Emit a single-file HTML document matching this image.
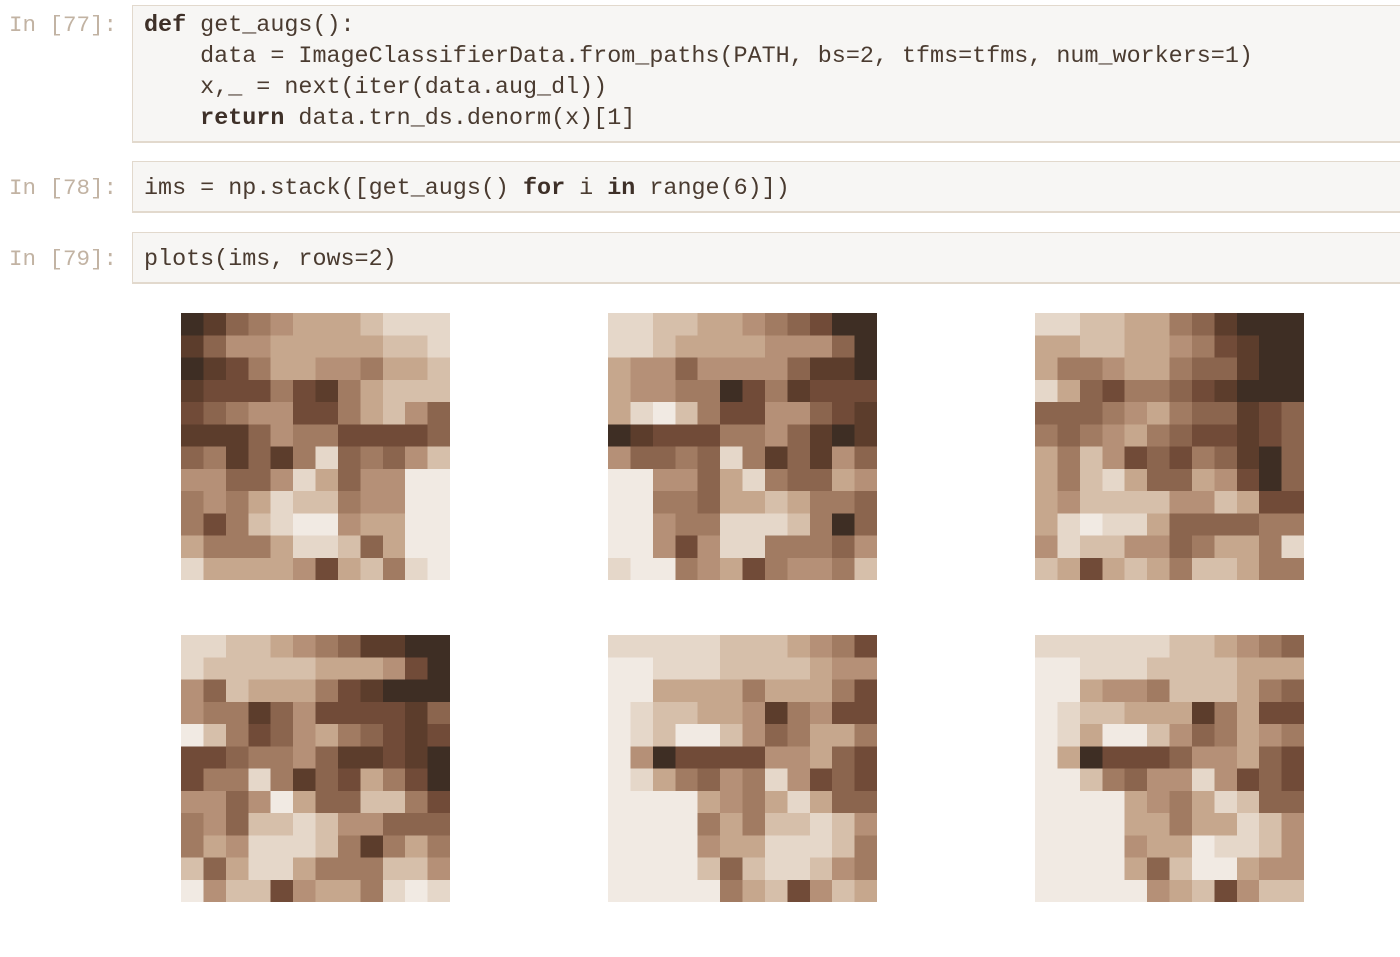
<!DOCTYPE html>
<html><head><meta charset="utf-8"><style>
body{margin:0;width:1400px;height:957px;background:#fff;overflow:hidden;position:relative;font-family:"Liberation Mono",monospace;font-size:23.4px;color:#4a3b30}
.cell{position:absolute;left:132px;width:1280px;background:#f7f6f4;border:1px solid #e2d9cd;border-bottom:2px solid #e2d9cd;box-sizing:border-box}
.p{position:absolute;left:9px;color:#c2b3a3;font-size:22.5px}
.l{position:absolute;left:11px;white-space:pre;line-height:31px}
b{font-weight:bold;color:#3e3028}
svg{position:absolute}
</style></head><body>
<div class="cell" style="top:5px;height:138px"><div class="l" style="top:5px"><b>def</b> get_augs():
    data = ImageClassifierData.from_paths(PATH, bs=2, tfms=tfms, num_workers=1)
    x,_ = next(iter(data.aug_dl))
    <b>return</b> data.trn_ds.denorm(x)[1]</div></div>
<div class="p" style="top:12px">In [77]:</div>
<div class="cell" style="top:161px;height:52px"><div class="l" style="top:12px">ims = np.stack([get_augs() <b>for</b> i <b>in</b> range(6)])</div></div>
<div class="p" style="top:175px">In [78]:</div>
<div class="cell" style="top:232px;height:52px"><div class="l" style="top:12px">plots(ims, rows=2)</div></div>
<div class="p" style="top:246px">In [79]:</div>
<div id="imgs"></div>
<script>
var pal=["#3e2e24","#5c3d2c","#714b38","#8b654e","#a17b62","#b59077","#c6a78d","#d6bfaa","#e5d7c9","#f1eae3"];
var G=[
["013456667888","135566666778","012466554667","122242146777","234552246753","111354422223","341314834357","553358635599","454687745599","424789956699","644468873699","866665267489"],
["887766543200","887666655530","655355553110","655440241222","689742255321","012224453101","533438413153","995536843365","994436676443","995448887403","995258844435","899456245547"],
["887766431000","667766542100","644566433100","863244321000","333456433123","434564322123","647523243103","647863365203","657777557622","689886333344","587755346648","762676477644"],
["887765431100","877777666520","537666421000","544135222213","974235643212","223445311210","244841326420","553596337742","453778755333","465888741464","736886444775","957725664898"],
["888887776542","998887777655","996666466642","987766514522","987997534664","950222255632","986435485232","999965468633","999946477875","999956688874","999973788754","999994672576"],
["888888776543","998887777666","996554777643","987766614622","986997534654","960222355632","997435585232","999965468733","999966466875","999956698875","999963799655","999995672577"]];
var X=[181,608,1035],Y=[313,635],W=269,H=267,h="";
for(var k=0;k<6;k++){var x0=X[k%3],y0=Y[Math.floor(k/3)];
h+='<svg style="left:'+x0+'px;top:'+y0+'px" width="'+W+'" height="'+H+'" viewBox="0 0 12 12" preserveAspectRatio="none" shape-rendering="crispEdges">';
for(var r=0;r<12;r++)for(var c=0;c<12;c++)h+='<rect x="'+c+'" y="'+r+'" width="1.02" height="1.02" fill="'+pal[+G[k][r][c]]+'"/>';
h+='</svg>';}
document.getElementById("imgs").innerHTML=h;
</script>
</body></html>
